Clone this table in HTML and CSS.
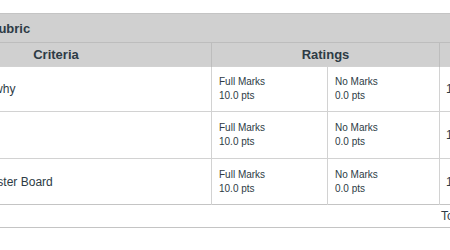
FILE: index.html
```html
<!DOCTYPE html>
<html>
<head>
<meta charset="utf-8">
<link rel="stylesheet" href="styles.css">
</head>
<body>
<div class="viewport">
  <table class="rubric">
    <colgroup>
      <col class="c-crit">
      <col class="c-rate1">
      <col class="c-rate2">
      <col class="c-pts">
    </colgroup>
    <thead>
      <tr class="title"><th colspan="4">Rubric</th></tr>
      <tr class="heads">
        <th>Criteria</th>
        <th colspan="2">Ratings</th>
        <th>Pts</th>
      </tr>
    </thead>
    <tbody>
      <tr class="r1">
        <td class="crit">Explain briefly why</td>
        <td class="rating"><div>Full Marks</div><div>10.0 pts</div></td>
        <td class="rating"><div>No Marks</div><div>0.0 pts</div></td>
        <td class="pts">10.0 pts</td>
      </tr>
      <tr class="r2">
        <td class="crit">Layout</td>
        <td class="rating"><div>Full Marks</div><div>10.0 pts</div></td>
        <td class="rating"><div>No Marks</div><div>0.0 pts</div></td>
        <td class="pts">10.0 pts</td>
      </tr>
      <tr class="r3">
        <td class="crit">Creativity of Poster Board</td>
        <td class="rating"><div>Full Marks</div><div>10.0 pts</div></td>
        <td class="rating"><div>No Marks</div><div>0.0 pts</div></td>
        <td class="pts">10.0 pts</td>
      </tr>
    </tbody>
    <tfoot>
      <tr><td colspan="4" class="total">Total Points: 30.0</td></tr>
    </tfoot>
  </table>
</div>
</body>
</html>
```

FILE: styles.css
```css
html, body {
  margin: 0;
  padding: 0;
  background: #ffffff;
}
body {
  font-family: "Liberation Sans", Arial, sans-serif;
  color: #2d3b45;
}
.viewport {
  width: 450px;
  height: 250px;
  overflow: hidden;
  padding-top: 13px;
  box-sizing: border-box;
}
.rubric {
  margin-left: -100px;
  width: 646px;
  border-collapse: collapse;
  table-layout: fixed;
  border: 1px solid #c4c4c4;
}
.c-crit { width: 311px; }
.c-rate1 { width: 116px; }
.c-rate2 { width: 112px; }
.c-pts { width: 107px; }

.title th {
  background: #d0d0d0;
  text-align: left;
  font-size: 13px;
  font-weight: bold;
  height: 28px;
  padding: 0 0 0 88px;
  border-bottom: 1px solid #bdbdbd;
}
.heads th {
  background: #d0d0d0;
  font-size: 13px;
  font-weight: bold;
  height: 23px;
  padding: 0;
  text-align: center;
  border-left: 1px solid #bdbdbd;
}
.heads th:first-child { border-left: none; }
td {
  border-top: 1px solid #d2d2d2;
  vertical-align: middle;
}
tbody td { height: 44px; padding: 0 7px; }
.r2 td { height: 46px; }
.r3 td { height: 45px; }
.crit {
  font-size: 12px;
  padding-left: 15px;
}
.rating {
  font-size: 10px;
  line-height: 14px;
  border-left: 1px solid #d2d2d2;
}
.pts {
  font-size: 12px;
  padding-left: 6px;
  border-left: 1px solid #d2d2d2;
}
.total {
  height: 22px;
  padding: 0 13px 0 0;
  text-align: right;
  font-size: 12px;
  border-top: 1px solid #c4c4c4;
}
```
